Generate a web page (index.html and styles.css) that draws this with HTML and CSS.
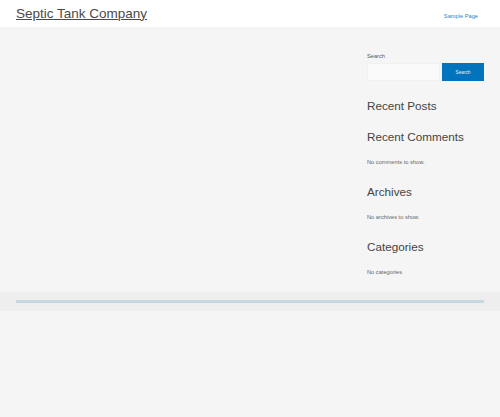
FILE: index.html
```html
<!DOCTYPE html>
<html lang="en">
<head>
<meta charset="utf-8">
<title>Septic Tank Company</title>
<link rel="stylesheet" href="styles.css">
</head>
<body>
<header class="site-header">
  <a class="site-title" href="#">Septic Tank Company</a>
  <nav class="site-nav"><a href="#">Sample Page</a></nav>
</header>
<div class="site-content">
  <main class="primary"></main>
  <aside class="sidebar">
    <section class="widget widget-search">
      <label class="search-label">Search</label>
      <div class="search-row">
        <span class="search-input"></span>
        <span class="search-btn">Search</span>
      </div>
    </section>
    <section class="widget widget-posts">
      <h2 class="widget-title">Recent Posts</h2>
    </section>
    <section class="widget">
      <h2 class="widget-title">Recent Comments</h2>
      <p class="widget-text">No comments to show.</p>
    </section>
    <section class="widget">
      <h2 class="widget-title">Archives</h2>
      <p class="widget-text">No archives to show.</p>
    </section>
    <section class="widget">
      <h2 class="widget-title">Categories</h2>
      <p class="widget-text">No categories</p>
    </section>
  </aside>
</div>
<footer class="site-footer">
  <div class="footer-line"></div>
</footer>
</body>
</html>
```
FILE: styles.css
```css
html, body {
  margin: 0;
  padding: 0;
  background: #f5f5f5;
  font-family: "Liberation Sans", Arial, sans-serif;
  color: #3a3a3a;
}

.site-header {
  height: 27px;
  background: #ffffff;
  display: flex;
  align-items: center;
  justify-content: space-between;
  padding: 0 22px 0 16px;
}

.site-title {
  font-size: 13.5px;
  line-height: 16px;
  color: #4a4a4a;
  text-decoration: underline;
  text-decoration-thickness: 1px;
  margin-top: 1px;
}

.site-nav a {
  font-size: 5.7px;
  color: #2a86c6;
  text-decoration: none;
  position: relative;
  top: -1px;
}

.site-content {
  height: 265px;
  display: flex;
  padding: 0 16px;
}

.primary {
  flex: 1;
}

.sidebar {
  width: 117px;
  padding-top: 26px;
}

.widget {
  margin-bottom: 19px;
}

.widget-search {
  margin-bottom: 18px;
}

.widget-posts {
  margin-bottom: 17px;
}

.search-label {
  display: block;
  font-size: 5.7px;
  line-height: 7px;
  color: #555555;
}

.search-row {
  display: flex;
  gap: 2px;
  margin-top: 3px;
  height: 18px;
}

.search-input {
  flex: 1;
  background: #fafafa;
  border: 1px solid #f1f1f1;
}

.search-btn {
  width: 42px;
  background: #0274be;
  color: #e6f0f8;
  font-size: 4.7px;
  display: flex;
  align-items: center;
  justify-content: center;
}

.widget-title {
  margin: 0;
  font-weight: normal;
  font-size: 11.7px;
  line-height: 14px;
  color: #444444;
}

.widget-text {
  margin: 15px 0 0;
  font-size: 5.7px;
  line-height: 7px;
  color: #666666;
}

.site-footer {
  height: 19px;
  background: #eeeeee;
  padding: 8px 16px 0;
  box-sizing: border-box;
}

.footer-line {
  height: 2.5px;
  background: #c6d8e0;
}
```
